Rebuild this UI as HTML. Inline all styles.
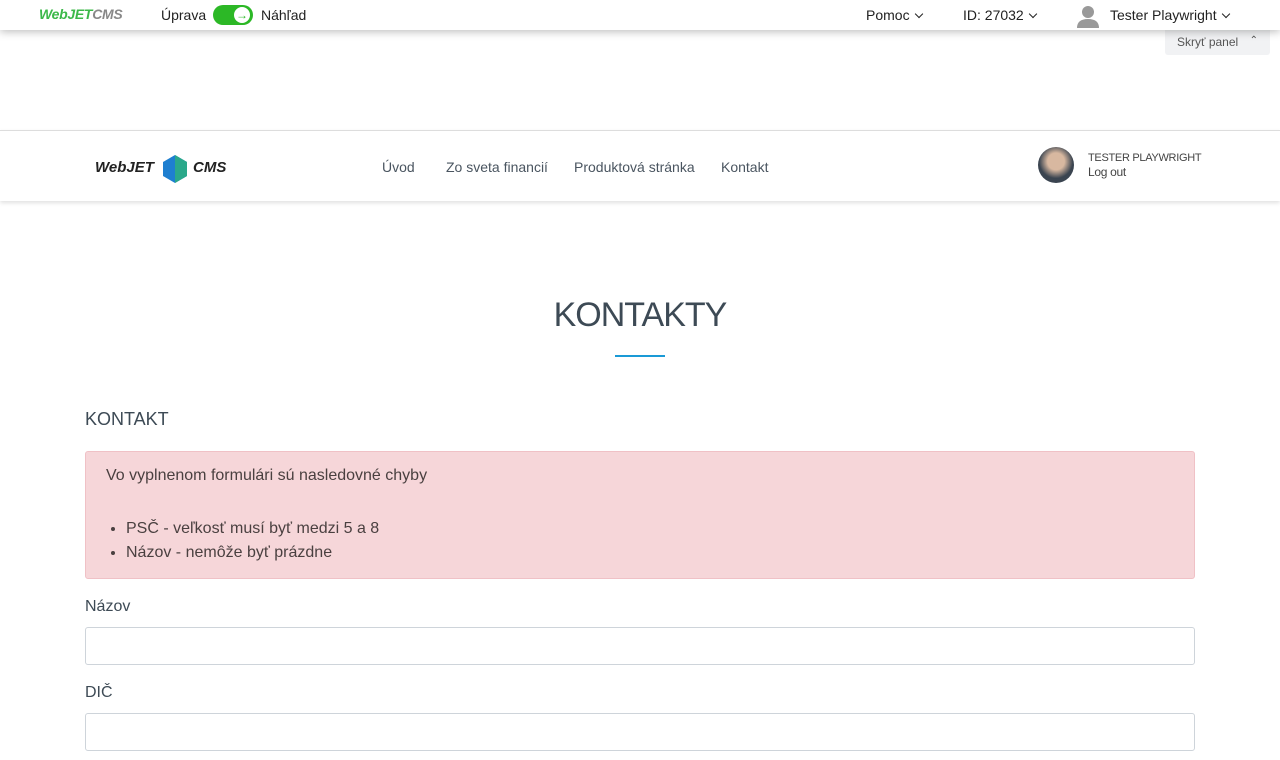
<!DOCTYPE html>
<html><head><meta charset="utf-8"><style>
*{box-sizing:border-box;margin:0;padding:0}
body{width:1280px;height:760px;overflow:hidden;background:#fff;font-family:"Liberation Sans",sans-serif;color:#3d4a55;position:relative}
.top{position:absolute;left:0;top:0;width:1280px;height:30px;background:#fff;box-shadow:0 2px 8px rgba(0,0,0,.25);z-index:2;font-size:14px;color:#222}
.top span{position:absolute;top:7px}
.tog{position:absolute;left:213px;top:5px;width:40px;height:20px;border-radius:10px;background:#2cb826}
.tog i{position:absolute;right:3px;top:2px;width:16px;height:16px;border-radius:50%;background:#fff;color:#2cb826;font-style:normal;font-size:12px;line-height:16px;text-align:center;font-weight:bold}
.chev{display:inline-block;width:6px;height:6px;border-right:1.5px solid #222;border-bottom:1.5px solid #222;transform:rotate(45deg);margin-left:6px;position:relative;top:-3px}
.skryt{position:absolute;left:1165px;top:30px;width:105px;height:25px;background:#f1f2f4;font-size:12px;color:#555;padding:5px 12px;border-radius:0 0 3px 3px}
.nav{position:absolute;left:0;top:130px;width:1280px;height:71px;border-top:1px solid #ddd;box-shadow:0 2px 4px rgba(0,0,0,.12);font-size:14px;color:#4a5560}
.nav a{position:absolute;top:28px}
h1{position:absolute;top:296px;width:1280px;text-align:center;font-weight:normal;font-size:34px;color:#3d4a55;letter-spacing:-1px}
.line{position:absolute;left:615px;top:355px;width:50px;height:2px;background:#1a9ad6}
h2{position:absolute;left:85px;top:409px;font-weight:normal;font-size:18px}
.alert{position:absolute;left:85px;top:451px;width:1110px;height:128px;background:#f6d6d9;border:1px solid #f0c1c6;border-radius:3px;padding:15px 20px;font-size:16px;color:#4a4040}
.alert ul{margin:32px 0 0 20px;line-height:24px}
label{position:absolute;left:85px;font-size:16px}
.inp{position:absolute;left:85px;width:1110px;height:38px;border:1px solid #ced4da;border-radius:3px}
</style></head><body>
<div class="top">
<span style="left:39px;top:6px;font-weight:bold;font-style:italic;font-size:14px;letter-spacing:-.3px"><b style="color:#3cb84a">WebJET</b><b style="color:#888">CMS</b></span>
<span style="left:161px">Úprava</span>
<div class="tog"><i>→</i></div>
<span style="left:261px">Náhľad</span>
<span style="left:866px">Pomoc<i class="chev"></i></span>
<span style="left:963px">ID: 27032<i class="chev"></i></span>
<svg style="position:absolute;left:1076px;top:4px" width="24" height="24"><circle cx="12" cy="8" r="6" fill="#999"/><path d="M1 24 Q1 15 12 15 Q23 15 23 24Z" fill="#999"/></svg>
<span style="left:1110px">Tester Playwright<i class="chev"></i></span>
</div>
<div class="skryt">Skryť panel <span style="float:right;font-size:10px">⌃</span></div>
<div class="nav">
<div style="position:absolute;left:95px;top:28px;font-weight:bold;font-style:italic;font-size:15px;color:#222">WebJET</div>
<svg style="position:absolute;left:163px;top:24px" width="24" height="28"><polygon points="12,0 24,7 24,21 12,28 0,21 0,7" fill="#1e7fd0"/><polygon points="12,0 24,7 24,21 12,28" fill="#2aa88a"/></svg>
<div style="position:absolute;left:193px;top:28px;font-weight:bold;font-style:italic;font-size:15px;color:#222">CMS</div>
<a style="left:382px">Úvod</a><a style="left:446px">Zo sveta financií</a><a style="left:574px">Produktová stránka</a><a style="left:721px">Kontakt</a>
<div style="position:absolute;left:1038px;top:16px;width:36px;height:36px;border-radius:50%;background:radial-gradient(circle at 50% 40%,#d8b8a0 30%,#3a4450 60%)"></div>
<div style="position:absolute;left:1088px;top:20px;font-size:11px;line-height:14px;color:#444;letter-spacing:-.3px">TESTER PLAYWRIGHT<br><span style="font-size:12px">Log out</span></div>
</div>
<h1>KONTAKTY</h1><div class="line"></div>
<h2>KONTAKT</h2>
<div class="alert">Vo vyplnenom formulári sú nasledovné chyby<ul><li>PSČ - veľkosť musí byť medzi 5 a 8</li><li>Názov - nemôže byť prázdne</li></ul></div>
<label style="top:598px">Názov</label><div class="inp" style="top:627px"></div>
<label style="top:684px">DIČ</label><div class="inp" style="top:713px"></div>
</body></html>
